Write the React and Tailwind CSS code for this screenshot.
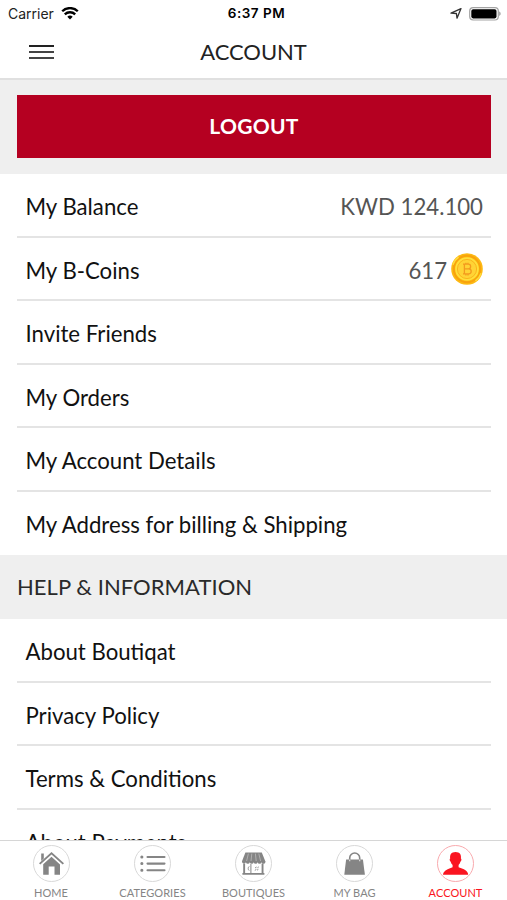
import React from 'react';
import clsx from 'clsx';

const accountItems = [
    { label: 'My Balance', value: 'KWD 124.100' },
    { label: 'My B-Coins', value: '617', coin: true },
    { label: 'Invite Friends' },
    { label: 'My Orders' },
    { label: 'My Account Details' },
    { label: 'My Address for billing & Shipping' },
];

const helpItems = [
    { label: 'About Boutiqat' },
    { label: 'Privacy Policy' },
    { label: 'Terms & Conditions' },
    { label: 'About Payments' },
];

// --- Icons ---
const WifiIcon = () => (
    <svg width="18" height="14" viewBox="0 0 18 14" fill="none" stroke="#000" strokeWidth="2.3">
        <path d="M1.2 4.3a11 11 0 0 1 15.6 0" />
        <path d="M3.8 7.4a7.4 7.4 0 0 1 10.4 0" />
        <path d="M9 12.4L6.3 9.7a3.9 3.9 0 0 1 5.4 0z" fill="#000" stroke="none" />
    </svg>
);

const LocationIcon = () => (
    <svg width="12" height="12" viewBox="0 0 12 12" fill="none" stroke="#333" strokeWidth="1.3" strokeLinejoin="round">
        <path d="M11 .6L7 10.2L6.4 5.5L1 5.2z" />
    </svg>
);

const BatteryIcon = () => (
    <svg width="32" height="14" viewBox="0 0 32 14">
        <rect x="0.7" y="0.6" width="28.6" height="12.4" rx="3.4" fill="#fff" stroke="#a3a3a3" strokeWidth="1.2" />
        <rect x="2.3" y="2.2" width="25.2" height="9.2" rx="1.8" fill="#000" />
        <path d="M30.3 4.6c1.6.6 1.6 3.8 0 4.4z" fill="#888" />
    </svg>
);

const CoinIcon = () => (
    <svg className="mt-px" width="32" height="32" viewBox="0 0 32 32">
        <circle cx="16" cy="16" r="15.8" fill="#fdb913" />
        <circle cx="16" cy="16" r="13.2" fill="none" stroke="#f8a30d" strokeWidth="2" />
        <path d="M1.2 11.5A15.5 15.5 0 0 1 7 3.4L8.1 4.8A13.6 13.6 0 0 0 2.6 12zM30.8 20.5A15.5 15.5 0 0 1 25 28.6L23.9 27.2A13.6 13.6 0 0 0 29.4 20z" fill="#ffdc3c" />
        <circle cx="16" cy="16" r="11.8" fill="#ffdf3b" />
        <circle cx="16" cy="16" r="9.6" fill="#ffd335" stroke="#fbb41c" strokeWidth="1" />
        <g fill="none" stroke="#f39a1e" strokeWidth="1.3">
            <path d="M12 11.2h5.4c3 0 3 4.6 0 4.6h-4.2h4.6c3.2 0 3.2 5 0 5H12M13.4 11.2v9.6M14.9 9.7v1.5M17 9.7v1.5M14.9 20.8v1.6M17 20.8v1.6" />
        </g>
    </svg>
);

const HomeIcon = () => (
    <>
        <path d="M8.2 8.6h2.6v5l-2.6 2.4z" />
        <path d="M18.5 7L31 18.2l-1.3 1.4L18.5 9.6L7.3 19.6L6 18.2z" />
        <path d="M18.5 11.8l8.5 7.6v10.4h-5.5v-8.2h-5.8v8.2h-5.5V19.2z" />
    </>
);

const CategoriesIcon = () => (
    <g fill="none" stroke="currentColor" strokeWidth="2.1" strokeLinecap="round">
        <path d="M13.5 12h17M13.5 18.6h17M13.5 25.2h17" />
        <path d="M7.8 12h.1M7.8 18.6h.1M7.8 25.2h.1" strokeWidth="3" />
    </g>
);

const BoutiquesIcon = () => (
    <>
        <path d="M10.4 7.4h16.4l3.5 8.8H7z" />
        <path d="M7 16h23.4v1.2a2 2 0 0 1-3.9 0a2 2 0 0 1-3.9 0a2 2 0 0 1-3.9 0a2 2 0 0 1-3.9 0a2 2 0 0 1-3.9 0a2 2 0 0 1-3.8 0z" />
        <path d="M13.4 8.6l-1.8 7.4M16.8 8.6l-.8 7.4M20.4 8.6l.8 7.4M23.8 8.6l1.8 7.4" stroke="#fff" strokeWidth="0.7" opacity="0.5" fill="none" />
        <path d="M8.2 18.5h1.9v9.5h5.3V19h1v9h10.2v-9.5h1.9V28h.9v1.8H7.4V28h.8z" />
        <path d="M14.2 21.4c-1.3.6-1.3 3.6 0 4.2M20 23l1.6-1M19.8 25.4l1.6-1M22.4 22.8l1.4-.9M22 25.2l1.4-.9" stroke="currentColor" strokeWidth="0.9" fill="none" />
    </>
);

const BagIcon = () => (
    <>
        <path d="M10.1 14.4h16.8l2 15.4H8.3z" />
        <path d="M13.7 15.8v-2.8a5 5 0 0 1 10 0v2.8" fill="none" stroke="currentColor" strokeWidth="1.6" />
        <path d="M13.7 14.4v1.8M23.7 14.4v1.8" stroke="#ddd" strokeWidth="1.2" />
    </>
);

const AccountIcon = () => (
    <path d="M18.5 7c4.3 0 6 2.8 5.4 6.6c.9.3.6 2.7-.5 3.2c-.4 1.6-1.1 2.4-1.8 3.1v2.3c3.5 1.4 7.6 2.1 9.2 5.8c.2.6.3 1.2.4 1.8H6c.1-.9.3-1.7.8-2.5c1.9-3 5.4-3.8 8.8-5.1v-2.3c-.8-.7-1.5-1.5-1.9-3.1c-1.1-.5-1.4-2.9-.5-3.2C12.6 9.8 14.3 7 18.5 7z" />
);

const tabs = [
    { label: 'HOME', icon: HomeIcon },
    { label: 'CATEGORIES', icon: CategoriesIcon },
    { label: 'BOUTIQUES', icon: BoutiquesIcon },
    { label: 'MY BAG', icon: BagIcon },
    { label: 'ACCOUNT', icon: AccountIcon, active: true },
];

const StatusBar = () => (
    <div className="grid h-7 shrink-0 grid-cols-[1fr_80px_1fr] items-center pl-2 pr-[6px] font-['Inter','Liberation_Sans',sans-serif] text-black">
        <div className="flex items-center gap-[7px] pb-px text-[14px] text-[#222]">
            <span>Carrier</span>
            <WifiIcon />
        </div>
        <div className="ml-[4px] whitespace-nowrap pb-px text-center text-[13.5px] font-semibold tracking-[0.5px]">6:37 PM</div>
        <div className="flex items-center justify-end gap-[7px] pb-px">
            <LocationIcon />
            <BatteryIcon />
        </div>
    </div>
);

const Header = () => (
    <header className="grid h-[52px] shrink-0 grid-cols-[80px_1fr_80px] items-center border-b-2 border-[#e0e0e0] pb-[3px]">
        <button className="ml-[29px] flex w-[25px] flex-col gap-1" aria-label="Menu">
            <span className="h-[2px] bg-[#222]" />
            <span className="h-[2px] bg-[#444]" />
            <span className="h-[2px] bg-[#444]" />
        </button>
        <h1 className="text-center text-[22px] tracking-[-0.05px] text-[#222]">ACCOUNT</h1>
    </header>
);

const MenuList = ({ items }) => (
    <ul className="pl-[17px] pr-4">
        {items.map((item) => (
            <li key={item.label} className="flex h-[63.5px] items-center justify-between border-b-2 border-[#e4e4e4] pl-[8.5px] pr-2 text-[22.2px] text-[#111] last:border-transparent">
                <span className="pt-[4px]">{item.label}</span>
                {item.value && (
                    <span className="flex items-center gap-1 text-[#555]">
                        <span className="pt-[4px]">{item.value}</span>
                        {item.coin && <CoinIcon />}
                    </span>
                )}
            </li>
        ))}
    </ul>
);

const TabBar = () => (
    <nav className="grid h-[60px] shrink-0 grid-cols-[102px_101px_101px_101px_101px] border-t border-[#d6d6d6] bg-white">
        {tabs.map(({ label, icon: Icon, active }) => (
            <button key={label} className={clsx('flex flex-col items-center pt-1', active ? 'text-[#fa1420]' : 'text-[#858585]')}>
                <svg width="37" height="37" viewBox="0 0 37 37" fill="currentColor">
                    <circle cx="18.5" cy="18.5" r="18" fill="none" stroke={active ? '#f7a0a5' : '#d4d4d4'} strokeWidth="0.9" />
                    <Icon />
                </svg>
                <span className="mt-[3px] text-[11px] leading-[16px] tracking-[0.05px]">{label}</span>
            </button>
        ))}
    </nav>
);

export default function App() {
    return (
        <div className="flex h-[900px] w-[507px] flex-col overflow-hidden bg-white font-['Lato','Open_Sans',sans-serif]">
            <StatusBar />
            <Header />
            <main className="min-h-0 flex-1 overflow-hidden">
                <div className="bg-[#efefef] pb-4 pl-[17px] pr-4 pt-[15px]">
                    <button className="h-[63px] w-full bg-[#b50021] pb-[2px] text-[21px] font-bold tracking-[0.3px] text-white">LOGOUT</button>
                </div>
                <MenuList items={accountItems} />
                <h2 className="flex h-16 items-center bg-[#efefef] px-[17px] pb-[2px] text-[22px] tracking-[0.05px] text-[#2a2a2a]">HELP & INFORMATION</h2>
                <MenuList items={helpItems} />
            </main>
            <TabBar />
        </div>
    );
}
